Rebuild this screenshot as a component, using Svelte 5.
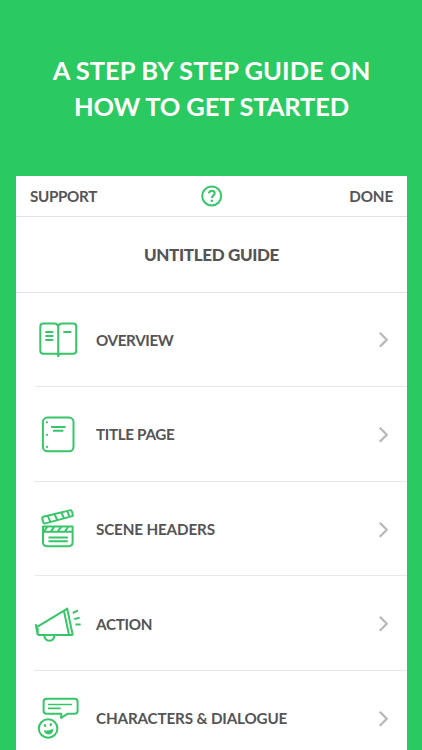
<script>
  const items = [
    { icon: 'book', label: 'OVERVIEW', spacing: -0.4, dy: 0.6 },
    { icon: 'page', label: 'TITLE PAGE', spacing: -0.35, dy: 0.9 },
    { icon: 'clapper', label: 'SCENE HEADERS', spacing: -0.15, dy: -0.8 },
    { icon: 'megaphone', label: 'ACTION', spacing: -0.3, dy: 1.6 },
    { icon: 'dialogue', label: 'CHARACTERS & DIALOGUE', spacing: -0.15, dy: 2 }
  ];
</script>

<main>
  <h1><span class="one">A STEP BY STEP GUIDE ON</span><span class="two">HOW TO GET STARTED</span></h1>
  <section class="card">
    <header>
      <span class="support">SUPPORT</span>
      <svg class="help" viewBox="0 0 22 22" aria-hidden="true">
        <circle cx="10.700" cy="11" r="9.500" />
        <path d="M7.900 8.400C8.100 6.600 9.300 5.700 10.800 5.700c1.700 0 2.900 1 2.900 2.500 0 2.200-2.800 2.200-2.800 4.800" />
        <circle class="dot" cx="10.800" cy="15.800" r="1.250" />
      </svg>
      <span class="done">DONE</span>
    </header>
    <h2>UNTITLED GUIDE</h2>
    <ul>
      {#each items as item}
        <li>
          <svg class="icon" viewBox="0 0 60 60" aria-hidden="true">
            <g transform="translate(0 {item.dy})">
              {#if item.icon === 'book'}
                <path d="M28.2 45.2c-.5-.7-1.2-1-2.2-1H13.3c-2 0-3-1-3-3V17c0-2 1-3 3-3H24c2.8 0 4.2 1.400 4.200 4 0-2.600 1.400-4 4.200-4h10.800c2 0 3 1 3 3v24.200c0 2-1 3-3 3H30.400c-1 0-1.700.3-2.200 1zM28.200 18v29.400" />
                <path d="M15.300 22.500h8M15.300 26.400h8M15.300 30.300h8M33.300 22.500h8" />
              {:else if item.icon === 'page'}
                <rect x="12.900" y="12.700" width="30.600" height="33.700" rx="4.500" />
                <path d="M21 22.200h14.500M23 25.800h10.300" />
                <path class="holes" d="M17 17.400h.01M17 29.900h.01M17 42h.01" />
              {:else if item.icon === 'clapper'}
                <path d="M13.200 18.500 39.700 12.200c1.200-.3 2 .1 2.300 1.300l.7 2.500c.3 1.200-.1 1.900-1.300 2.200L15.500 25.200c-1.200.3-1.900-.1-2.200-1.200l-.9-3.100c-.3-1.300-.1-2.100.8-2.400z" />
                <path d="m17.700 17.700 2.700 5.900M24.500 16l2.700 5.800M31.300 14.400l2.700 5.500M37.200 13l2.300 5.200" />
                <path d="M13 28.400h29.600v15.700c0 2.600-1.300 3.900-3.900 3.900H16.900c-2.600 0-3.900-1.300-3.900-3.900zM13 33.500h29.600M14 33l3.200-4.200M21 33l3.200-4.200M28 33l3.200-4.200M35 33l3.200-4.200" />
                <path d="M18.500 39.300h19.300M18.500 43h19.300" />
              {:else if item.icon === 'megaphone'}
                <path d="M5.700 29.500 7.700 40.300M6.300 32.700 37 14.300M37 13.100 42.800 40.900M42.500 40.400 7.700 40.300M33.900 16.300 39 40.200M7.700 40.300v-6.800" />
                <path d="M14.200 40.400c.3 3.800 2.500 5.700 5.200 5.700s4.900-1.900 4.900-5.700" />
                <path d="m42.800 18.400 5.100-2.700M44.200 24.500l5.400-1.400M45.400 29.800h5.200" />
              {:else}
                <path d="M16.600 8.800h28c2 0 3 1 3 3v8.900c0 2-1 3-3 3h-6.800l-6.600 4.200v-4.200H16.600c-2 0-3-1-3-3v-8.900c0-2 1-3 3-3z" />
                <path class="thin" d="M18 14.500h24M18 18.400h12.600" />
                <circle cx="18.100" cy="38.500" r="9.300" />
                <path class="solid" d="M13.800 40.500c3.300.2 6.500-.4 9.400-1.800.2 3.500-1.500 5.500-4.200 5.700-2.500.2-4.500-1.300-5.200-3.900z" />
                <path class="eyes" d="M14.900 35v1M20.700 34.200v1" />
              {/if}
            </g>
          </svg>
          <span class="label" style:letter-spacing="{item.spacing}px">{item.label}</span>
          <svg class="chevron" viewBox="0 0 12 18" aria-hidden="true"><path d="m1.800 2.800 7 7-7 7" /></svg>
        </li>
      {/each}
    </ul>
  </section>
</main>

<style>
  :global(body) { margin: 0; background: #2bc961; }
  main {
    box-sizing: border-box;
    width: 422px;
    height: 750px;
    overflow: hidden;
    padding: 51.500px 14.700px 0 15.700px;
    background: #2bc961;
    font-family: Lato, "Liberation Sans", sans-serif;
  }
  h1 {
    display: flex;
    flex-direction: column;
    align-items: center;
    height: 124px;
    margin: 0;
    color: #fff;
    font-size: 25.500px;
    font-weight: 700;
    line-height: 36px;
    white-space: nowrap;
  }
  .one { letter-spacing: 0.040px; }
  .two { letter-spacing: -0.150px; }
  .card { height: 580px; background: #fff; color: #545457; }
  header {
    box-sizing: border-box;
    display: grid;
    grid-template-columns: 1fr 22px 1fr;
    align-items: center;
    height: 41.500px;
    padding: 0 14px;
    border-bottom: 1px solid #e2e2e3;
    font-size: 16px;
    font-weight: 700;
  }
  .support { justify-self: start; letter-spacing: -0.350px; transform: scaleX(0.95); transform-origin: left; }
  .done { justify-self: end; letter-spacing: -0.150px; transform: scaleX(0.95); transform-origin: right; }
  .help { width: 22px; height: 22px; }
  h2 {
    box-sizing: border-box;
    height: 75.500px;
    margin: 0;
    border-bottom: 1px solid #e2e2e3;
    font-size: 17px;
    font-weight: 900;
    line-height: 75px;
    text-align: center;
    white-space: nowrap;
    transform: none;
    letter-spacing: -0.350px;
  }
  ul { margin: 0; padding: 0 0 0 19.300px; list-style: none; }
  li {
    box-sizing: border-box;
    display: flex;
    align-items: center;
    height: 94.650px;
    padding-right: 17px;
    border-bottom: 1px solid #e8e8e9;
  }
  .icon { flex: none; width: 60px; height: 60px; margin-left: -5px; }
  .label {
    margin-left: 6.300px;
    font-size: 16px;
    font-weight: 700;
    white-space: nowrap;
    transform: scaleX(0.95);
    transform-origin: left;
  }
  .chevron { width: 12px; height: 18px; margin-left: auto; }
  svg { fill: none; stroke: #36c668; stroke-width: 2; stroke-linejoin: round; }
  .chevron { stroke: #b8b8bb; stroke-width: 2.300; }
  .dot { fill: #36c668; stroke: none; }
  .holes { stroke-width: 2.200; stroke-linecap: round; }
  .eyes { stroke-width: 2.200; stroke-linecap: round; }
  .thin { stroke-width: 1.700; }
  .solid { fill: #36c668; stroke: none; }
</style>
